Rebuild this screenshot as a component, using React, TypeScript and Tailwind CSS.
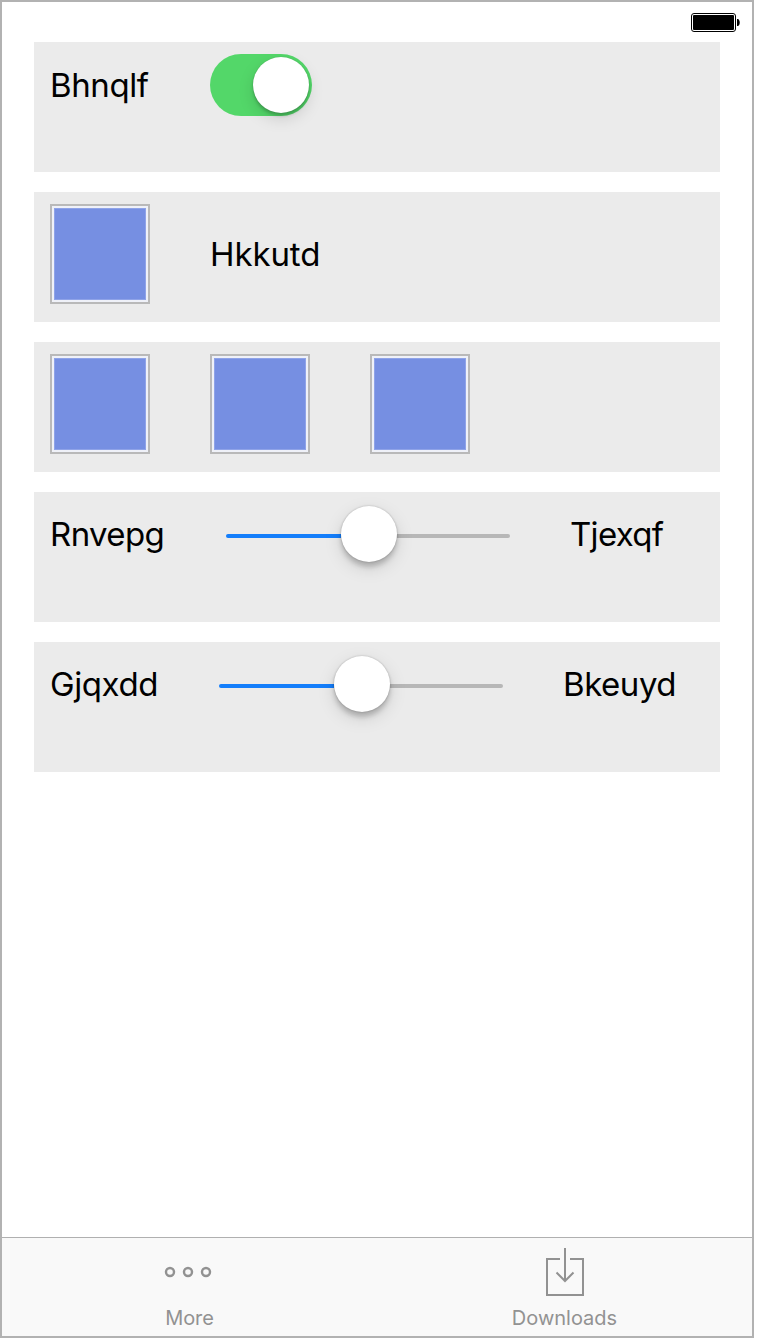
import type { ReactNode } from 'react';

function Card({ children }: { children: ReactNode }) {
  return <section className="flex h-[130px] w-[686px] items-start gap-[60px] bg-[#ebebeb] pt-3 pl-4">{children}</section>;
}

function Label({ children, className = '' }: { children: string; className?: string }) {
  return <span className={`block h-[60px] text-[33px] leading-[60px] whitespace-nowrap text-black ${className}`}>{children}</span>;
}

function Swatch() {
  return (
    <div className="size-[100px] shrink-0 border-2 border-[#b9b9b9] bg-[#eff1f8] p-0.5">
      <div className="size-full border border-[#8fa3e8] bg-[#768fe2]" />
    </div>
  );
}

function Toggle() {
  return (
    <button role="switch" aria-checked="true" className="flex h-[62px] w-[102px] shrink-0 items-center justify-end rounded-full bg-[#53d769] pr-[3px]">
      <span className="size-14 rounded-full bg-white shadow-[0_6px_16px_rgba(0,0,0,0.13),0_3px_3px_rgba(0,0,0,0.18),0_0_1px_rgba(0,0,0,0.25)]" />
    </button>
  );
}

function Slider() {
  return (
    <div className="flex h-[60px] w-[284px] shrink-0 items-center">
      <div className="mt-1 h-1 w-[115px] rounded-l-full bg-[#147efb]" />
      <div className="z-10 size-14 shrink-0 rounded-full bg-white shadow-[0_6px_18px_rgba(0,0,0,0.13),0_5px_5px_rgba(0,0,0,0.19),0_0_2px_rgba(0,0,0,0.25)]" />
      <div className="mt-1 h-1 w-[113px] rounded-r-full bg-[#b7b7b7]" />
    </div>
  );
}

function Battery() {
  return (
    <svg width="50" height="20" viewBox="0 0 50 20">
      <rect x="0.5" y="0.5" width="44" height="18" rx="2.5" fill="white" stroke="black" />
      <rect x="2" y="2" width="41" height="15" rx="1" fill="black" />
      <path d="M46 6H47C49.3 7 49.3 12 47 13H46Z" fill="black" />
    </svg>
  );
}

function MoreIcon() {
  return (
    <svg width="48" height="12" viewBox="0 0 48 12" fill="none" stroke="#929292" strokeWidth="2.4">
      <circle cx="6" cy="6" r="4" />
      <circle cx="24" cy="6" r="4" />
      <circle cx="42" cy="6" r="4" />
    </svg>
  );
}

function DownloadIcon() {
  return (
    <svg width="40" height="50" viewBox="0 0 40 50" fill="none" stroke="#929292" strokeWidth="2">
      <path d="M15 12H2V48H38V12H25" />
      <path d="M20 1V34M11.5 25.5L20 34L28.5 25.5" />
    </svg>
  );
}

export default function App() {
  return (
    <div className="min-h-[1340px] bg-white font-['Inter',sans-serif]">
      <div className="flex h-[1338px] w-[754px] flex-col border-2 border-[#b2b2b2] bg-white">
        <header className="flex h-10 justify-end pt-[11px] pr-[11px]">
          <Battery />
        </header>
        <main className="flex flex-1 flex-col gap-5 pl-8">
          <Card>
            <Label className="w-[100px] pt-[1px] tracking-[-0.4px]">Bhnqlf</Label>
            <Toggle />
          </Card>
          <Card>
            <Swatch />
            <Label className="mt-5 tracking-[-0.1px]">Hkkutd</Label>
          </Card>
          <Card>
            <Swatch />
            <Swatch />
            <Swatch />
          </Card>
          <Card>
            <Label className="w-[116px] tracking-[-0.6px]">Rnvepg</Label>
            <Slider />
            <Label className="tracking-[-0.7px]">Tjexqf</Label>
          </Card>
          <Card>
            <Label className="w-[109px] tracking-[-0.4px]">Gjqxdd</Label>
            <Slider />
            <Label className="tracking-[-0.45px]">Bkeuyd</Label>
          </Card>
        </main>
        <nav className="grid h-[99px] grid-cols-2 border-t border-[#b0b0b0] bg-[#f9f9f9] text-xl leading-6 text-[#929292]">
          <a className="flex flex-col items-center">
            <span className="mr-1 flex h-[68px] items-center"><MoreIcon /></span>
            <span className="tracking-[-0.05px]">More</span>
          </a>
          <a className="flex flex-col items-center">
            <span className="flex h-[68px] items-center"><DownloadIcon /></span>
            <span>Downloads</span>
          </a>
        </nav>
      </div>
    </div>
  );
}
